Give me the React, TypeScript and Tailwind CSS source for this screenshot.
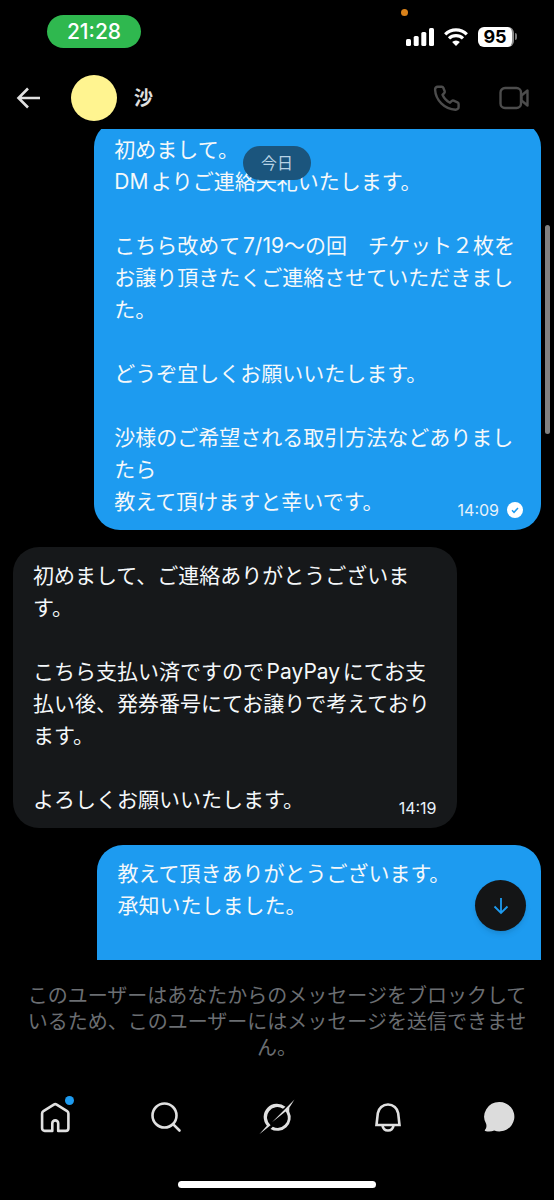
import React from "react";

const FIRST = [
  "初めまして。",
  "DMよりご連絡失礼いたします。",
  "",
  "こちら改めて7/19～の回　チケット２枚をお譲り頂きたくご連絡させていただきました。",
  "",
  "どうぞ宜しくお願いいたします。",
  "",
  "沙様のご希望される取引方法などありましたら",
  "教えて頂けますと幸いです。",
];

const SECOND = [
  "初めまして、ご連絡ありがとうございます。",
  "",
  "こちら支払い済ですのでPayPayにてお支払い後、発券番号にてお譲りで考えております。",
  "",
  "よろしくお願いいたします。",
];

const THIRD = ["教えて頂きありがとうございます。", "承知いたしました。", "", ""];

type BubbleProps = { lines: string[]; time?: string; mine?: boolean; read?: boolean; wide?: boolean };

function Bubble({ lines, time, mine, read, wide }: BubbleProps) {
  const last = lines.length - 1;
  return (
    <div
      className={`rounded-[26px] pb-3 pl-5 pr-[18px] pt-[13px] text-[21px] leading-8 text-[#f5f8fa] [text-autospace:normal] ${
        wide ? "w-[84.6%]" : "w-[84%]"
      } ${mine ? "self-end bg-[#1d9bf0]" : "self-start bg-[#16181a]"}`}
    >
      {lines.slice(0, last).map((line, i) => (
        <p key={i} className="min-h-8">
          {line}
        </p>
      ))}
      <div className="flex min-h-8 items-end justify-between">
        <p>{lines[last]}</p>
        {time && (
          <div className="flex items-center gap-2 text-[16px] leading-4 text-[#e8f2fa]">
            <time className={read ? "" : "mr-0.5"}>{time}</time>
            {read && (
              <svg viewBox="0 0 16 16" className="size-4" aria-label="既読">
                <circle cx="8" cy="8" r="8" fill="#fff" />
                <path d="M5 8.3l2 2 4-4.4" fill="none" stroke="#1d9bf0" strokeWidth="1.5" />
              </svg>
            )}
          </div>
        )}
      </div>
    </div>
  );
}

function StatusBar() {
  return (
    <div className="relative flex h-[67px] items-start justify-between pl-[47px] pr-[37px] pt-[15px]">
      <div className="flex h-[33px] w-[94px] items-center justify-center rounded-full bg-[#2fb84f] text-[21px] font-medium text-white">
        21:28
      </div>
      <span className="absolute right-[146px] top-[9px] size-[7px] rounded-full bg-[#d9821a]" />
      <div className="flex h-[43px] items-center gap-[10px]">
        <svg viewBox="0 0 28 18" className="h-[18px] w-7" fill="#fff">
          <rect x="0" y="11" width="5" height="7" rx="1.5" />
          <rect x="7.7" y="8" width="5" height="10" rx="1.5" />
          <rect x="15.3" y="4" width="5" height="14" rx="1.5" />
          <rect x="23" y="0" width="5" height="18" rx="1.5" />
        </svg>
        <svg viewBox="0 0 24 18" className="h-[18px] w-6" fill="none" stroke="#fff" strokeWidth="3.2">
          <path d="M1.2 6.3a15.4 15.4 0 0 1 21.6 0" />
          <path d="M5 10.4a10 10 0 0 1 14 0" />
          <path d="M12 18l-3.900-3.900a5.600 5.600 0 0 1 7.800 0z" fill="#fff" stroke="none" />
        </svg>
        <div className="flex items-center gap-px">
          <div className="flex h-5 w-[36px] items-center justify-center rounded-[6px] border-r-2 border-[#8a8a8a] bg-white text-[18px] font-bold leading-5 text-black">
            95
          </div>
          <span className="h-[7px] w-0.5 rounded-r-full bg-[#7a7a7a]" />
        </div>
      </div>
    </div>
  );
}

function Header() {
  return (
    <header className="flex h-[62px] items-center pl-4 pr-6">
      <button aria-label="戻る" className="mr-[30px]">
        <svg viewBox="0 0 25 22" className="h-[22px] w-[25px]" fill="none" stroke="#e0e0e0" strokeWidth="2.6">
          <path d="M24 11H2.5M12 1.5L2.5 11l9.5 9.5" />
        </svg>
      </button>
      <span className="size-[46px] rounded-full bg-[#fff490]" />
      <h1 className="ml-[17px] flex-1 pt-0.5 text-[19px] font-bold text-[#e0e0e0]">沙</h1>
      <button aria-label="通話" className="mr-[38px]">
        <svg viewBox="0 0 28 28" className="size-7" fill="none" stroke="#4c4c4c" strokeWidth="2.4" strokeLinejoin="round">
          <path d="M4.600 2.800h4.200c.7 0 1.300.4 1.500 1l1.400 3.400c.2.600.1 1.200-.3 1.600l-1.900 2c1.400 3.200 4.200 6.200 7.500 7.900l1.900-1.800c.5-.4 1.100-.5 1.700-.3l3.900 1.700c.7.3 1.100.9 1.100 1.600v3c0 1.700-1.400 2.900-3.100 2.800C11.300 25 2.600 16 2.100 5.700c-.1-1.600 1-2.900 2.500-2.900z" />
        </svg>
      </button>
      <button aria-label="ビデオ通話">
        <svg viewBox="0 0 31 24" className="h-6 w-[31px]" fill="none" stroke="#4c4c4c" strokeWidth="2.4" strokeLinejoin="round">
          <rect x="1.5" y="2" width="20.5" height="20" rx="4.5" />
          <path d="M22.5 9.500l6-5v15l-6-5z" />
        </svg>
      </button>
    </header>
  );
}

const ICON = "size-9";

function Nav() {
  return (
    <nav className="flex h-[72px] items-center justify-around">
      <a href="#home" aria-label="ホーム" className="relative">
        <svg viewBox="0 0 36 36" className={ICON} fill="none" stroke="#e0e0e0" strokeWidth="2.6" strokeLinejoin="round">
          <path d="M15.3 31.900H7.700a2.600 2.600 0 0 1-2.600-2.600V14.600c0-1 .5-1.900 1.300-2.400l10.400-6.600a2.700 2.700 0 0 1 2.900 0l10.400 6.600c.8.500 1.300 1.400 1.300 2.400v14.700a2.600 2.600 0 0 1-2.600 2.600h-7.600v-7.600a2.950 2.950 0 0 0-5.900 0z" />
        </svg>
        <span className="absolute -right-px top-[-3px] size-[9px] rounded-full bg-[#1d9bf0]" />
      </a>
      <a href="#search" aria-label="検索">
        <svg viewBox="0 0 36 36" className={ICON} fill="none" stroke="#e0e0e0" strokeWidth="2.6" strokeLinecap="round">
          <circle cx="16.500" cy="16.500" r="12" />
          <path d="M25.300 25.300L31.500 31.500" />
        </svg>
      </a>
      <a href="#grok" aria-label="Grok">
        <svg viewBox="0 0 36 36" className={ICON} fill="#e0e0e0">
          <path d="M26.500 7.800A13.300 13.300 0 0 0 7.900 26.700L.3 35.200 11.600 26.200A10.300 10.300 0 0 1 24 9.800z" />
          <path d="M30.200 12.400A13.300 13.300 0 0 1 11.500 29.900L13.800 27.800A10.300 10.300 0 0 0 27.600 13.900L26.600 12.600 13 23.200 35.500.5 30.300 8.800z" />
        </svg>
      </a>
      <a href="#notifications" aria-label="通知">
        <svg viewBox="0 0 36 36" className={ICON} fill="none" stroke="#e0e0e0" strokeWidth="2.6">
          <path d="M6.500 26L7.800 14.300a10.300 10.300 0 0 1 20.400 0L29.500 26z" />
          <path d="M12.500 26.500c.5 3.200 2.700 5 5.500 5s5-1.800 5.500-5" />
        </svg>
      </a>
      <a href="#messages" aria-label="メッセージ">
        <svg viewBox="0 0 36 36" className={ICON} fill="#dcdcdc">
          <path d="M18.500 3a15 14.700 0 1 1-5.300 28.500c-2.500 1-6 1.300-9 .4-.6-.2-.6-.8-.2-1.200 1.500-1.700 1.700-3.600 1.200-5.700A15 14.700 0 0 1 18.500 3z" />
        </svg>
      </a>
    </nav>
  );
}

export default function App() {
  return (
    <div className="flex min-h-screen flex-col bg-black font-['Inter','Noto_Sans_CJK_JP',sans-serif]">
      <StatusBar />
      <Header />
      <main className="relative max-h-[831px] overflow-hidden">
        <div className="-mt-2 flex flex-col gap-[17px] px-[13px]">
          <Bubble lines={FIRST} time="14:09" mine read wide />
          <Bubble lines={SECOND} time="14:19" />
          <Bubble lines={THIRD} mine />
        </div>
        <div className="absolute left-1/2 top-[17px] flex h-[34px] w-[68px] -translate-x-1/2 items-center justify-center rounded-full bg-[#1b557d] text-[16px] text-[#b9d3e4]">
          今日
        </div>
        <span className="absolute right-1 top-24 h-[209px] w-[5px] rounded-full bg-[#808080]" />
        <button
          aria-label="最新のメッセージへ"
          className="absolute bottom-[29px] right-7 flex size-[51px] items-center justify-center rounded-full bg-[#141516] shadow-md"
        >
          <svg viewBox="0 0 16 18" className="h-[18px] w-4" fill="none" stroke="#1d9bf0" strokeWidth="1.8">
            <path d="M8 1v15M1.500 9.500L8 16l6.500-6.500" />
          </svg>
        </button>
      </main>
      <p className="px-[27px] pt-[23px] text-center text-[20px] leading-[26px] text-[#6b6e72]">
        このユーザーはあなたからのメッセージをブロックしているため、このユーザーにはメッセージを送信できません。
      </p>
      <div className="mt-5">
        <Nav />
      </div>
      <div className="mx-auto mb-3 mt-auto h-[7px] w-[198px] rounded-full bg-white" />
    </div>
  );
}
